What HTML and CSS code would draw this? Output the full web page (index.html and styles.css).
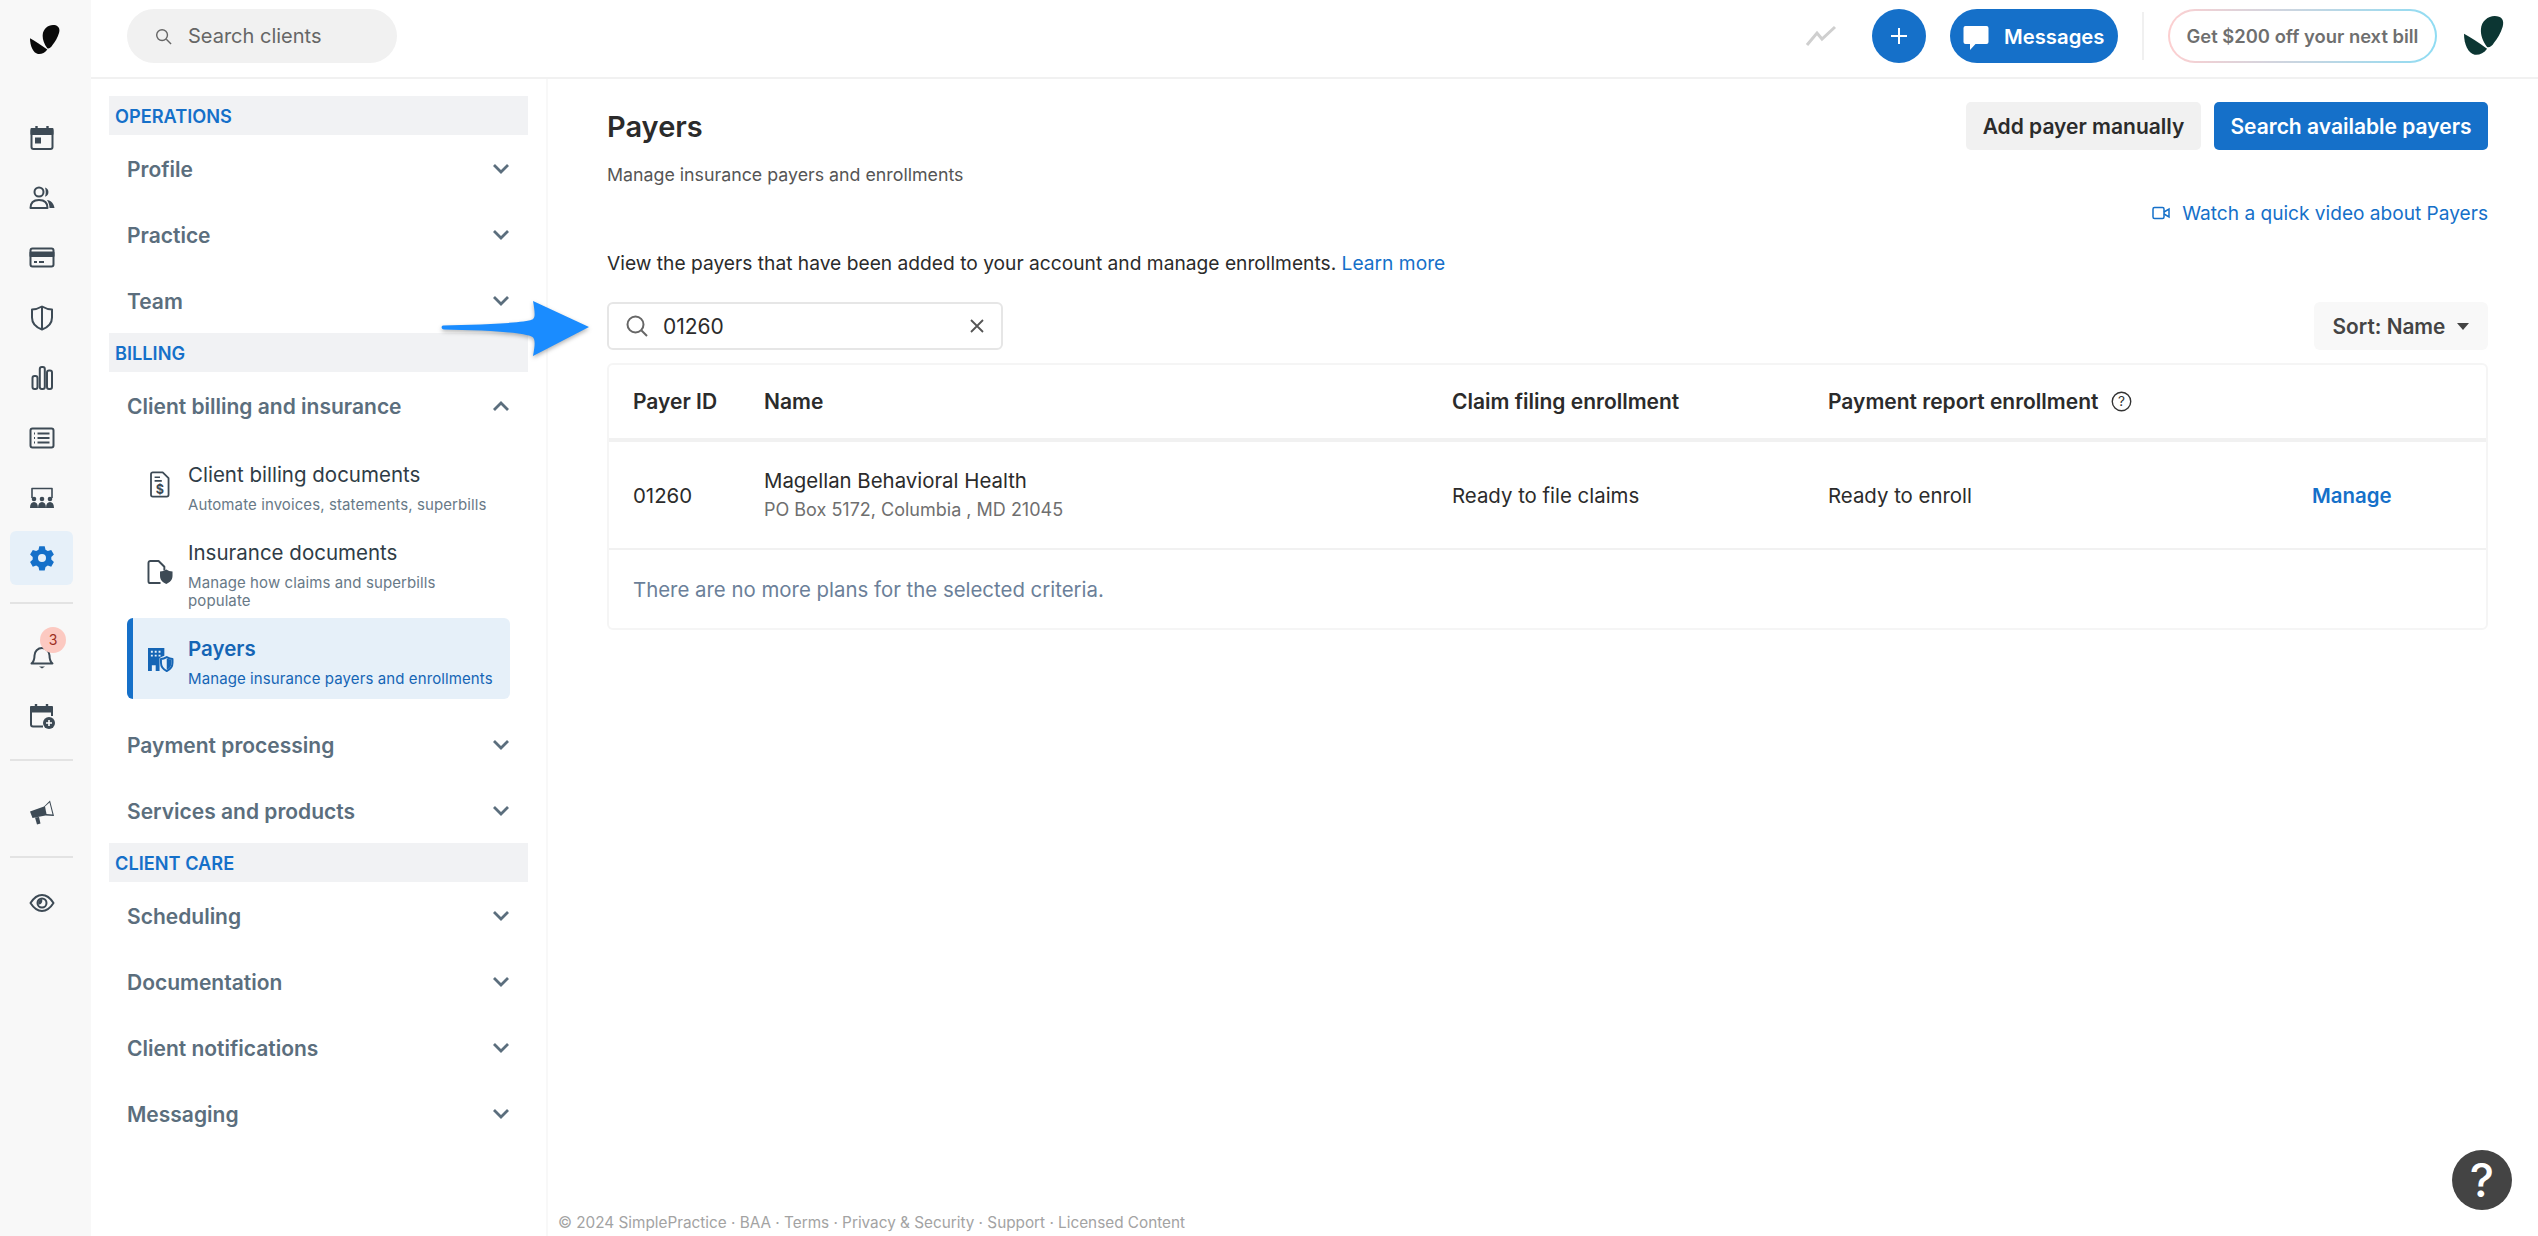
FILE: index.html
```html
<!DOCTYPE html>
<html lang="en">
<head>
<meta charset="utf-8">
<title>Payers</title>
<link rel="stylesheet" href="styles.css">
</head>
<body>
<div class="app">
  <nav class="rail">
    <div class="rail-logo">
      <svg width="30" height="30" viewBox="0 0 30 30" fill="#0a0a0a"><path d="M12.700 10C13 4 18 0 23 0 28 0 30.500 3 29 8 27.500 13 25 17 22.500 20 21 22.500 19 24 17.300 23.300 14 19 12.400 14 12.700 10Z"/><path d="M0 13.300C5 16 11 20 17.300 24.500 15 28 11 29.500 8 29 3 28 0 21 0 13.300Z"/></svg>
    </div>
    <a class="rail-item"><svg class="ri" viewBox="0 0 26 26"><path d="M7.500 1v4M18.500 1v4" stroke-width="2.400"/><rect x="2.500" y="4" width="21" height="20" rx="2"/><path d="M2.500 4h21v5h-21z" fill="#3d4a55"/><rect x="6" y="12.500" width="6" height="6" fill="#3d4a55" stroke="none"/></svg></a>
    <a class="rail-item"><svg class="ri" viewBox="0 0 26 26"><circle cx="10" cy="7" r="4.500"/><path d="M1.500 23c0-5.500 3.500-8 8.500-8s8.500 2.500 8.500 8z"/><path d="M16 2.500a4.800 4.800 0 0 1 0 9.200c1-3 1-6 0-9.200zM18 15c4 .6 7 3.500 7.500 8h-5c0-3-1-6-2.500-8z" fill="#3d4a55" stroke="none"/></svg></a>
    <a class="rail-item"><svg class="ri" viewBox="0 0 26 26"><rect x="1.500" y="3.500" width="23" height="18" rx="2"/><path d="M1.500 7.500h23v3.500h-23z" fill="#3d4a55"/><path d="M5 17h3M10 17h5" stroke-width="1.800"/></svg></a>
    <a class="rail-item"><svg class="ri" viewBox="0 0 26 26"><path d="M13 1.500c3.500 2 7 3 10 3v8c0 6-4.500 10-10 12-5.500-2-10-6-10-12v-8c3 0 6.500-1 10-3zM13 1.500v23"/></svg></a>
    <a class="rail-item"><svg class="ri" viewBox="0 0 26 26"><rect x="3.500" y="11" width="5" height="13" rx="2"/><rect x="10.800" y="2" width="5" height="22" rx="2"/><rect x="18" y="5.500" width="5" height="18.500" rx="2"/></svg></a>
    <a class="rail-item"><svg class="ri" viewBox="0 0 26 26"><rect x="1.500" y="3.500" width="23" height="19" rx="2"/><path d="M8.500 8.500h12M8.500 13h12M8.500 17.500h12"/><path d="M5 8.500h1M5 13h1M5 17.500h1"/></svg></a>
    <a class="rail-item"><svg class="ri" viewBox="0 0 26 26"><path d="M3 13V3.500h20V13" stroke-width="1.600"/><g fill="#3d4a55" stroke="none"><circle cx="5" cy="14" r="2.300"/><circle cx="13" cy="14" r="2.300"/><circle cx="21" cy="14" r="2.300"/><path d="M1 23c0-4 1.500-6 4-6s4 2 4 6zM9 23c0-4 1.500-6 4-6s4 2 4 6zM17 23c0-4 1.500-6 4-6s4 2 4 6z"/></g></svg></a>
    <a class="rail-item is-active"><svg class="ri" viewBox="0 0 26 26"><path fill="#1570c9" stroke="none" fill-rule="evenodd" d="M10.300 1.200h5.400l.8 3.500 2.300 1.300 3.400-1.100 2.700 4.700-2.600 2.400v2.600l2.600 2.400-2.700 4.700-3.400-1.100-2.300 1.300-.8 3.500h-5.400l-.8-3.500-2.300-1.300-3.400 1.100-2.700-4.700 2.600-2.400v-2.600l-2.600-2.400 2.700-4.700 3.400 1.100 2.300-1.300zM13 9a4 4 0 1 0 0 8 4 4 0 0 0 0-8z"/></svg></a>
    <hr class="rail-rule rule-a">
    <a class="rail-item"><svg class="ri" viewBox="0 0 26 26"><path d="M2.500 20.500c2.500-2 3-4 3-8a7.500 7.500 0 0 1 15 0c0 4 .5 6 3 8z"/><path d="M10 23.500h6l-3 2z" fill="#3d4a55" stroke="none"/></svg><span class="badge">3</span></a>
    <a class="rail-item"><svg class="ri" viewBox="0 0 26 26"><path d="M7 1v4M18 1v4" stroke-width="2.400"/><path d="M14 23.500H4a2 2 0 0 1-2-2V6a2 2 0 0 1 2-2h17a2 2 0 0 1 2 2v7"/><path d="M2 4h21v4.500H2z" fill="#3d4a55"/><circle cx="20" cy="20" r="6" fill="#3d4a55" stroke="none"/><path d="M20 17v6M17 20h6" stroke="#fff" stroke-width="1.600"/></svg></a>
    <hr class="rail-rule rule-b">
    <a class="rail-item"><svg class="ri" viewBox="0 0 26 26"><path d="M1 12.500 15 7.500 21 1.500 25 17 16.500 16.500 3.500 19z" fill="#3d4a55" stroke="none"/><path d="M16 7.500 20.500 3.500 23.500 15.500 17.500 15z" fill="#f8f8f8" stroke="none"/><path d="M6 18.500l2 7 3.500-1-1.500-6.500z" fill="#3d4a55" stroke="none"/></svg></a>
    <hr class="rail-rule rule-c">
    <a class="rail-item"><svg class="ri" viewBox="0 0 26 26"><path d="M1.500 13C5 7.500 9 5 13 5s8 2.500 11.500 8C21 18.500 17 21 13 21s-8-2.500-11.500-8z"/><circle cx="13" cy="13" r="4.500"/><path d="M13 9a4 4 0 0 0-3.500 5.500c2.500 0 4.500-2 3.500-5.500z" fill="#3d4a55" stroke="none"/></svg></a>
  </nav>

  <div class="body-col">
    <header class="topbar">
      <div class="top-search">
        <svg class="top-search-ico" viewBox="0 0 18 18"><circle cx="7.500" cy="7.500" r="5.700"/><path d="M12 12l5 5"/></svg>
        <span>Search clients</span>
      </div>
      <div class="top-right">
        <svg class="trend" viewBox="0 0 32 22"><path d="M2 20 12 8 17 14 30 2"/></svg>
        <button class="round-btn"><svg viewBox="0 0 18 18" width="18" height="18"><path d="M9 1v16M1 9h16" stroke="#fff" stroke-width="2"/></svg></button>
        <button class="msg-btn"><svg viewBox="0 0 26 26" width="26" height="26"><path fill="#fff" d="M2.500 1h21A2 2 0 0 1 25.500 3v14a2 2 0 0 1-2 2h-11l-5.500 6v-6H2.500a2 2 0 0 1-2-2V3a2 2 0 0 1 2-2z"/></svg><span>Messages</span></button>
        <span class="top-sep"></span>
        <span class="promo">Get $200 off your next bill</span>
        <svg class="top-logo" width="42" height="40" viewBox="0 0 30 30" fill="#0c3633"><path d="M12.700 10C13 4 18 0 23 0 28 0 30.500 3 29 8 27.500 13 25 17 22.500 20 21 22.500 19 24 17.300 23.300 14 19 12.400 14 12.700 10Z"/><path d="M0 13.300C5 16 11 20 17.300 24.500 15 28 11 29.500 8 29 3 28 0 21 0 13.300Z"/></svg>
      </div>
    </header>

    <div class="workspace">
      <aside class="sidebar">
        <div class="sec-head">OPERATIONS</div>
        <div class="nav-item"><span>Profile</span><svg class="chev" viewBox="0 0 18 12"><path d="M2 2l7 7 7-7"/></svg></div>
        <div class="nav-item"><span>Practice</span><svg class="chev" viewBox="0 0 18 12"><path d="M2 2l7 7 7-7"/></svg></div>
        <div class="nav-item"><span>Team</span><svg class="chev" viewBox="0 0 18 12"><path d="M2 2l7 7 7-7"/></svg></div>
        <div class="sec-head">BILLING</div>
        <div class="nav-item"><span>Client billing and insurance</span><svg class="chev" viewBox="0 0 18 12"><path d="M2 10l7-7 7 7"/></svg></div>
        <div class="sub-list">
          <div class="sub-row row-a">
            <svg class="sub-ico doc" viewBox="0 0 22 30"><path d="M3 1.500h11l6.500 6.500v18.500a2 2 0 0 1-2 2H3a2 2 0 0 1-2-2V3.500a2 2 0 0 1 2-2z"/><path d="M5 7h6M5 11h8" stroke-width="1.800"/><text class="doc-dollar" x="11" y="25" text-anchor="middle">$</text></svg>
            <div class="sub-text"><div class="sub-title">Client billing documents</div><div class="sub-desc">Automate invoices, statements, superbills</div></div>
          </div>
          <div class="sub-row row-b">
            <svg class="sub-ico wide" viewBox="0 0 28 26"><path d="M14 24H3.500a2 2 0 0 1-2-2V3a2 2 0 0 1 2-2h8.500l6 6v4"/><path d="M20 10c2 1.300 4 2 6.500 2v4.500c0 4-2.500 7-6.500 8.500-4-1.500-6.500-4.500-6.500-8.500V12c2.500 0 4.500-.7 6.500-2z" fill="#3d4a55" stroke="none"/></svg>
            <div class="sub-text"><div class="sub-title">Insurance documents</div><div class="sub-desc">Manage how claims and superbills<br>populate</div></div>
          </div>
          <div class="sub-row row-c is-current">
            <svg class="sub-ico wide" viewBox="0 0 28 26"><path fill="#1565b5" stroke="none" fill-rule="evenodd" d="M1 1h17v8c-3 1-5 2-5 3v13H9v-6H5v6H1zM4 4h2v2H4zM8 4h2v2H8zM12 4h2v2h-2zM4 8h2v2H4zM8 8h2v2H8zM12 8h2v2h-2z"/><path d="M20.500 10.500c2 1.200 4 2 6 2v4c0 4-2.500 7-6 8.500-3.500-1.500-6-4.500-6-8.500v-4c2 0 4-.8 6-2z" fill="#e6f0f9" stroke="#1565b5" stroke-width="2"/><path d="M20.500 12v12c2.800-1.300 5-4 5-7.500v-3.200c-1.800-.2-3.500-.6-5-1.300z" fill="#1565b5" stroke="none"/></svg>
            <div class="sub-text"><div class="sub-title">Payers</div><div class="sub-desc">Manage insurance payers and enrollments</div></div>
          </div>
        </div>
        <div class="nav-item"><span>Payment processing</span><svg class="chev" viewBox="0 0 18 12"><path d="M2 2l7 7 7-7"/></svg></div>
        <div class="nav-item"><span>Services and products</span><svg class="chev" viewBox="0 0 18 12"><path d="M2 2l7 7 7-7"/></svg></div>
        <div class="sec-head">CLIENT CARE</div>
        <div class="nav-item"><span>Scheduling</span><svg class="chev" viewBox="0 0 18 12"><path d="M2 2l7 7 7-7"/></svg></div>
        <div class="nav-item"><span>Documentation</span><svg class="chev" viewBox="0 0 18 12"><path d="M2 2l7 7 7-7"/></svg></div>
        <div class="nav-item"><span>Client notifications</span><svg class="chev" viewBox="0 0 18 12"><path d="M2 2l7 7 7-7"/></svg></div>
        <div class="nav-item"><span>Messaging</span><svg class="chev" viewBox="0 0 18 12"><path d="M2 2l7 7 7-7"/></svg></div>
      </aside>

      <main class="main">
        <div class="content">
          <div class="page-head">
            <h1>Payers</h1>
            <div class="head-actions">
              <button class="btn btn-grey">Add payer manually</button>
              <button class="btn btn-blue">Search available payers</button>
            </div>
          </div>
          <p class="page-sub">Manage insurance payers and enrollments</p>
          <div class="video-row">
            <a class="link video-link"><svg viewBox="0 0 18 14" width="18" height="14"><rect x="1" y="1.500" width="11" height="11" rx="1.500"/><path d="M12 6l5-3v8l-5-3"/></svg>Watch a quick video about Payers</a>
          </div>
          <p class="intro">View the payers that have been added to your account and manage enrollments. <a class="link">Learn more</a></p>
          <div class="toolbar">
            <div class="filter">
              <svg class="filter-ico" viewBox="0 0 24 24"><circle cx="10.500" cy="10.500" r="8"/><path d="M16.500 16.500 22 22"/></svg>
              <span class="filter-val">01260</span>
              <svg class="filter-x" viewBox="0 0 16 16"><path d="M2 2l12 12M14 2 2 14"/></svg>
            </div>
            <button class="sort">Sort: Name<i class="caret"></i></button>
          </div>
          <div class="table">
            <div class="t-row t-head">
              <div>Payer ID</div>
              <div>Name</div>
              <div>Claim filing enrollment</div>
              <div class="th-help">Payment report enrollment<svg viewBox="0 0 20 20" width="21" height="21"><circle cx="10" cy="10" r="8.800"/><text class="help-q" x="10" y="14.500" text-anchor="middle">?</text></svg></div>
              <div></div>
            </div>
            <div class="t-row t-body">
              <div>01260</div>
              <div><div class="payer-name">Magellan Behavioral Health</div><div class="payer-addr">PO Box 5172, Columbia , MD 21045</div></div>
              <div>Ready to file claims</div>
              <div>Ready to enroll</div>
              <div><a class="link manage">Manage</a></div>
            </div>
            <div class="t-empty">There are no more plans for the selected criteria.</div>
          </div>
        </div>
        <footer class="foot">© 2024 SimplePractice · BAA · Terms · Privacy &amp; Security · Support · Licensed Content</footer>
      </main>
    </div>
  </div>
</div>

<svg class="arrow" viewBox="0 0 160 64" width="160" height="64">
  <path fill="#1a8cff" d="M2 27.500C30 26.500 70 26 88 22.500 94 21 95 20 92 3L148 29 92 58C95 42 94 39 88 37.500 70 33 30 32 3 31.500 0 31 0 28 2 27.500Z"/>
</svg>
<button class="help">?</button>
</body>
</html>
```

FILE: styles.css
```css
* { box-sizing: border-box; }
html, body { margin: 0; padding: 0; height: 100%; }
body { font-family: Inter, "Liberation Sans", sans-serif; color: #2b2b2b; background: #fff; overflow: hidden; position: relative; }
button { font-family: inherit; border: 0; cursor: pointer; }
a { text-decoration: none; }
p, h1 { margin: 0; }

.app { display: flex; width: 2538px; height: 1236px; }

/* rail */
.rail { width: 91px; flex: none; background: #f8f8f8; display: flex; flex-direction: column; align-items: center; padding-right: 8px; }
.rail-logo { height: 108px; padding-top: 25px; padding-left: 6px; align-self: stretch; display: flex; justify-content: center; align-items: flex-start; }
.rail-item { position: relative; width: 63px; height: 60px; flex: none; display: flex; align-items: center; justify-content: center; }
.rail-item.is-active { background: #e6f0f9; border-radius: 6px; height: 54px; margin: 3px 0; }
.ri { width: 26px; height: 26px; fill: none; stroke: #3d4a55; stroke-width: 2; stroke-linejoin: round; }
.rail-rule { width: 63px; height: 2px; border: 0; background: #e3e3e3; margin: 0; flex: none; }
.rule-a { margin: 14px 0 22px; }
.rule-b { margin: 13px 0 21px; }
.rule-c { margin: 14px 0 15px; }
.badge { position: absolute; left: 30px; top: 1px; width: 26px; height: 26px; border-radius: 50%; background: #fcc9c1; color: #9c2f22; font-size: 14px; line-height: 26px; text-align: center; }

.body-col { flex: 1; display: flex; flex-direction: column; min-width: 0; }

/* topbar */
.topbar { height: 79px; flex: none; border-bottom: 2px solid #f1f1f1; display: flex; align-items: flex-start; justify-content: space-between; padding: 9px 33px 0 36px; }
.top-search { width: 270px; height: 54px; border-radius: 27px; background: #f1f1f1; display: flex; align-items: center; padding-left: 28px; gap: 16px; font-size: 20px; color: #666; }
.top-search-ico { width: 17px; height: 17px; fill: none; stroke: #666; stroke-width: 1.500; }
.top-right { display: flex; align-items: center; height: 54px; }
.trend { width: 32px; height: 22px; fill: none; stroke: #cfcfcf; stroke-width: 3; margin-right: 35px; }
.round-btn { width: 54px; height: 54px; border-radius: 50%; background: #1570c9; display: flex; align-items: center; justify-content: center; padding: 0; margin-right: 24px; }
.msg-btn { width: 168px; height: 54px; border-radius: 27px; background: #1570c9; color: #fff; font-size: 20.300px; font-weight: 600; display: flex; align-items: center; gap: 15px; padding: 4px 0 0 13px; }
.msg-btn span { margin-top: -3px; }
.top-sep { width: 2px; height: 48px; background: #f0f0f0; margin: 0 24px; }
.promo { width: 269px; height: 54px; border-radius: 27px; border: 2px solid transparent; background: linear-gradient(#fff, #fff) padding-box, linear-gradient(90deg, #fdcfd0, #8fdcf3) border-box; color: #6f6f6f; font-size: 18.400px; font-weight: 600; display: flex; align-items: center; justify-content: center; }
.top-logo { margin-left: 26px; }

.workspace { flex: 1; display: flex; min-height: 0; }

/* sidebar */
.sidebar { width: 457px; flex: none; border-right: 2px solid #f8f8f8; padding: 17px 16px 0 18px; }
.sec-head { height: 39px; background: #f1f2f4; color: #1570c9; font-size: 18.200px; font-weight: 600; line-height: 40px; padding-left: 6px; width: 419px; }
.nav-item { height: 66px; display: flex; align-items: center; justify-content: space-between; padding: 2px 18px 0; font-size: 21px; font-weight: 600; color: #5b6e7d; width: 419px; }
.chev { width: 18px; height: 12px; fill: none; stroke: #5b6e7d; stroke-width: 2.800; }
.sub-list { padding: 5px 18px 12px; width: 419px; }
.sub-row { display: flex; padding-left: 61px; position: relative; }
.row-a { height: 79px; padding-top: 17px; }
.row-b { height: 96px; padding-top: 16px; }
.row-c { height: 81px; padding-top: 16px; background: #e6f0f9; border-left: 6px solid #1570c9; border-radius: 6px; padding-left: 55px; }
.sub-title { font-size: 20.500px; line-height: 30px; color: #2f3c46; }
.sub-desc { font-size: 15px; line-height: 18px; margin-top: 6px; color: #687987; letter-spacing: .1px; }
.is-current .sub-title { color: #1565b5; font-weight: 600; }
.is-current .sub-desc { color: #1565b5; }
.sub-ico { position: absolute; fill: none; stroke: #3d4a55; stroke-width: 2; stroke-linejoin: round; }
.doc { left: 23px; top: 28px; width: 20px; height: 27px; }
.doc-dollar { font-size: 14px; font-weight: 700; fill: #3d4a55; stroke: none; font-family: Inter, sans-serif; }
.wide { left: 20px; width: 27px; height: 25px; }
.row-b .wide { top: 38px; }
.row-c .wide { left: 14px; top: 29px; }

/* main */
.main { flex: 1; display: flex; flex-direction: column; min-width: 0; }
.content { padding: 23px 50px 0 59px; }
.page-head { display: flex; justify-content: space-between; align-items: center; height: 48px; }
h1 { font-size: 29px; font-weight: 600; color: #2b2b2b; }
.head-actions { display: flex; gap: 13px; }
.btn { height: 48px; border-radius: 5px; font-size: 21px; font-weight: 600; }
.btn-grey { width: 235px; background: #f1f1f1; color: #2b2b2b; }
.btn-blue { width: 274px; background: #1570c9; color: #fff; }
.page-sub { font-size: 17.800px; line-height: 22px; margin-top: 14px; color: #555; }
.video-row { display: flex; justify-content: flex-end; margin-top: 14px; height: 26px; }
.link { color: #1570c9; }
.video-link { display: flex; align-items: center; gap: 12px; font-size: 19.100px; line-height: 26px; }
.video-link svg { fill: none; stroke: #1570c9; stroke-width: 1.500; }
.intro { font-size: 19.200px; line-height: 28px; margin-top: 23px; color: #2b2b2b; }
.toolbar { display: flex; justify-content: space-between; margin-top: 25px; height: 48px; }
.filter { width: 396px; height: 48px; border: 2px solid #e6e6e6; border-radius: 6px; display: flex; align-items: center; padding: 0 16px 0 16px; }
.filter-ico { width: 24px; height: 24px; fill: none; stroke: #666; stroke-width: 2; }
.filter-val { font-size: 21px; margin-left: 14px; flex: 1; color: #2b2b2b; }
.filter-x { width: 16px; height: 16px; fill: none; stroke: #555; stroke-width: 1.800; }
.sort { width: 174px; height: 48px; background: #f8f8f8; border-radius: 6px; font-size: 20.800px; font-weight: 600; color: #444; display: flex; align-items: center; justify-content: center; gap: 12px; padding: 0; }
.caret { width: 0; height: 0; border: 6px solid transparent; border-top: 7px solid #444; border-bottom: 0; }

.table { margin-top: 13px; border: 2px solid #f5f5f5; border-radius: 6px; height: 267px; }
.t-row { display: grid; grid-template-columns: 131px 688px 376px 484px 1fr; align-items: center; padding-left: 24px; font-size: 20.400px; }
.t-head { height: 77px; border-bottom: 4px solid #f1f1f1; font-weight: 600; font-size: 21px; }
.th-help { display: flex; align-items: center; gap: 13px; }
.th-help svg { fill: none; stroke: #333; stroke-width: 1.300; }
.help-q { font-size: 13px; font-weight: 400; fill: #333; stroke: none; font-family: Inter, sans-serif; }
.t-body { height: 108px; border-bottom: 2px solid #f1f1f1; }
.payer-name { line-height: 28px; }
.payer-addr { font-size: 18px; line-height: 26px; color: #6f6f6f; margin-top: 2px; }
.manage { font-weight: 600; }
.t-empty { height: 78px; padding-left: 24px; display: flex; align-items: center; font-size: 20.400px; color: #6b7f99; }

.foot { margin-top: auto; padding: 0 0 4px 10px; font-size: 15.300px; line-height: 18px; color: #a3a3a3; }

/* overlays */
.arrow { position: absolute; left: 441px; top: 298px; filter: drop-shadow(0 2px 2px rgba(0,0,0,.3)); }
.help { position: absolute; left: 2452px; top: 1150px; width: 60px; height: 60px; border-radius: 50%; background: #444; color: #fff; font-size: 46px; font-weight: 500; line-height: 60px; padding: 0; }
```
